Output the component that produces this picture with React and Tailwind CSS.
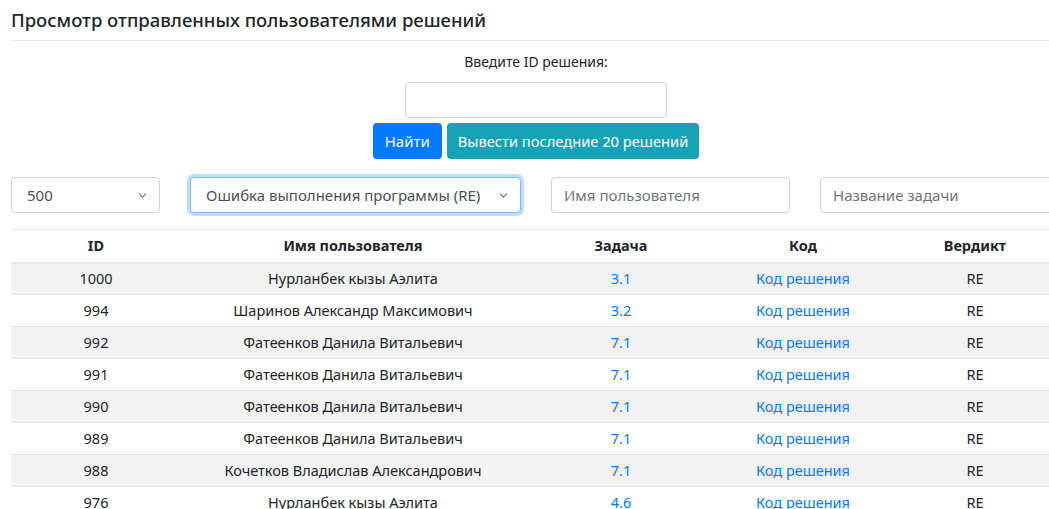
import React from 'react';
import { ChevronDown } from 'lucide-react';

const rows = [
  { id: 1000, user: 'Нурланбек кызы Аэлита', task: '3.1', verdict: 'RE' },
  { id: 994, user: 'Шаринов Александр Максимович', task: '3.2', verdict: 'RE' },
  { id: 992, user: 'Фатеенков Данила Витальевич', task: '7.1', verdict: 'RE' },
  { id: 991, user: 'Фатеенков Данила Витальевич', task: '7.1', verdict: 'RE' },
  { id: 990, user: 'Фатеенков Данила Витальевич', task: '7.1', verdict: 'RE' },
  { id: 989, user: 'Фатеенков Данила Витальевич', task: '7.1', verdict: 'RE' },
  { id: 988, user: 'Кочетков Владислав Александрович', task: '7.1', verdict: 'RE' },
  { id: 976, user: 'Нурланбек кызы Аэлита', task: '4.6', verdict: 'RE' },
];

function Select({ value, focused, className }) {
  return (
    <div
      className={`flex h-[36px] items-center justify-between rounded-[4px] border bg-white pl-[15px] pr-[10px] text-[15px] text-[#495057] ${
        focused ? 'border-[#80bdff] shadow-[0_0_0_3px_rgba(0,123,255,0.25)]' : 'border-[#ced4da]'
      } ${className}`}
    >
      <span>{value}</span>
      <ChevronDown size={13} strokeWidth={2.2} className="text-[#6c757d]" />
    </div>
  );
}

function TextInput({ placeholder, className }) {
  return (
    <div className={`flex h-[36px] items-center rounded-[4px] border border-[#ced4da] bg-white px-[12px] text-[15px] text-[#6c757d] ${className}`}>
      {placeholder}
    </div>
  );
}

export default function App() {
  return (
    <div className="w-[1049px] overflow-hidden bg-white pl-[11px] font-['Noto_Sans','Open_Sans',sans-serif] text-[#212529]">
      <div className="w-[1100px]">
        <h5 className="border-b border-[#e5e7eb] pb-[8px] pt-[8px] text-[18.5px] font-medium leading-[24px] text-[#212529]">
          Просмотр отправленных пользователями решений
        </h5>

        <div className="flex w-[1050px] flex-col items-center pt-[11px]">
          <label className="text-[14px] leading-[20px] text-[#212529]">Введите ID решения:</label>
          <div className="mt-[10px] h-[36px] w-[262px] rounded-[4px] border border-[#ced4da] bg-white" />
          <div className="mt-[5px] flex gap-[5px]">
            <button className="h-[36px] rounded-[4px] bg-[#007bff] px-[12px] text-[15px] text-white">Найти</button>
            <button className="h-[36px] rounded-[4px] bg-[#17a2b8] px-[11px] text-[14.7px] text-white">
              Вывести последние 20 решений
            </button>
          </div>
        </div>

        <div className="mt-[18px] flex gap-[30px]">
          <Select value="500" className="w-[149px]" />
          <Select value="Ошибка выполнения программы (RE)" focused className="w-[331px]" />
          <TextInput placeholder="Имя пользователя" className="w-[239px]" />
          <TextInput placeholder="Название задачи" className="w-[239px]" />
        </div>

        <table className="mt-[16px] w-[1050px] table-fixed border-collapse text-center text-[14.5px]">
          <colgroup>
            <col className="w-[170px]" />
            <col className="w-[344px]" />
            <col className="w-[192px]" />
            <col className="w-[172px]" />
            <col className="w-[172px]" />
          </colgroup>
          <thead>
            <tr className="border-t border-b-2 border-[#e5e7eb]">
              <th className="h-[33px] font-bold">ID</th>
              <th className="font-bold">Имя пользователя</th>
              <th className="font-bold">Задача</th>
              <th className="font-bold">Код</th>
              <th className="font-bold">Вердикт</th>
            </tr>
          </thead>
          <tbody>
            {rows.map((row, i) => (
              <tr key={row.id} className={`border-b border-[#dee2e6] ${i % 2 === 0 ? 'bg-[#f2f2f2]' : 'bg-white'}`}>
                <td className="h-[32px]">{row.id}</td>
                <td>{row.user}</td>
                <td className="text-[#007bff]">{row.task}</td>
                <td className="text-[#007bff]">Код решения</td>
                <td>{row.verdict}</td>
              </tr>
            ))}
          </tbody>
        </table>
      </div>
    </div>
  );
}
